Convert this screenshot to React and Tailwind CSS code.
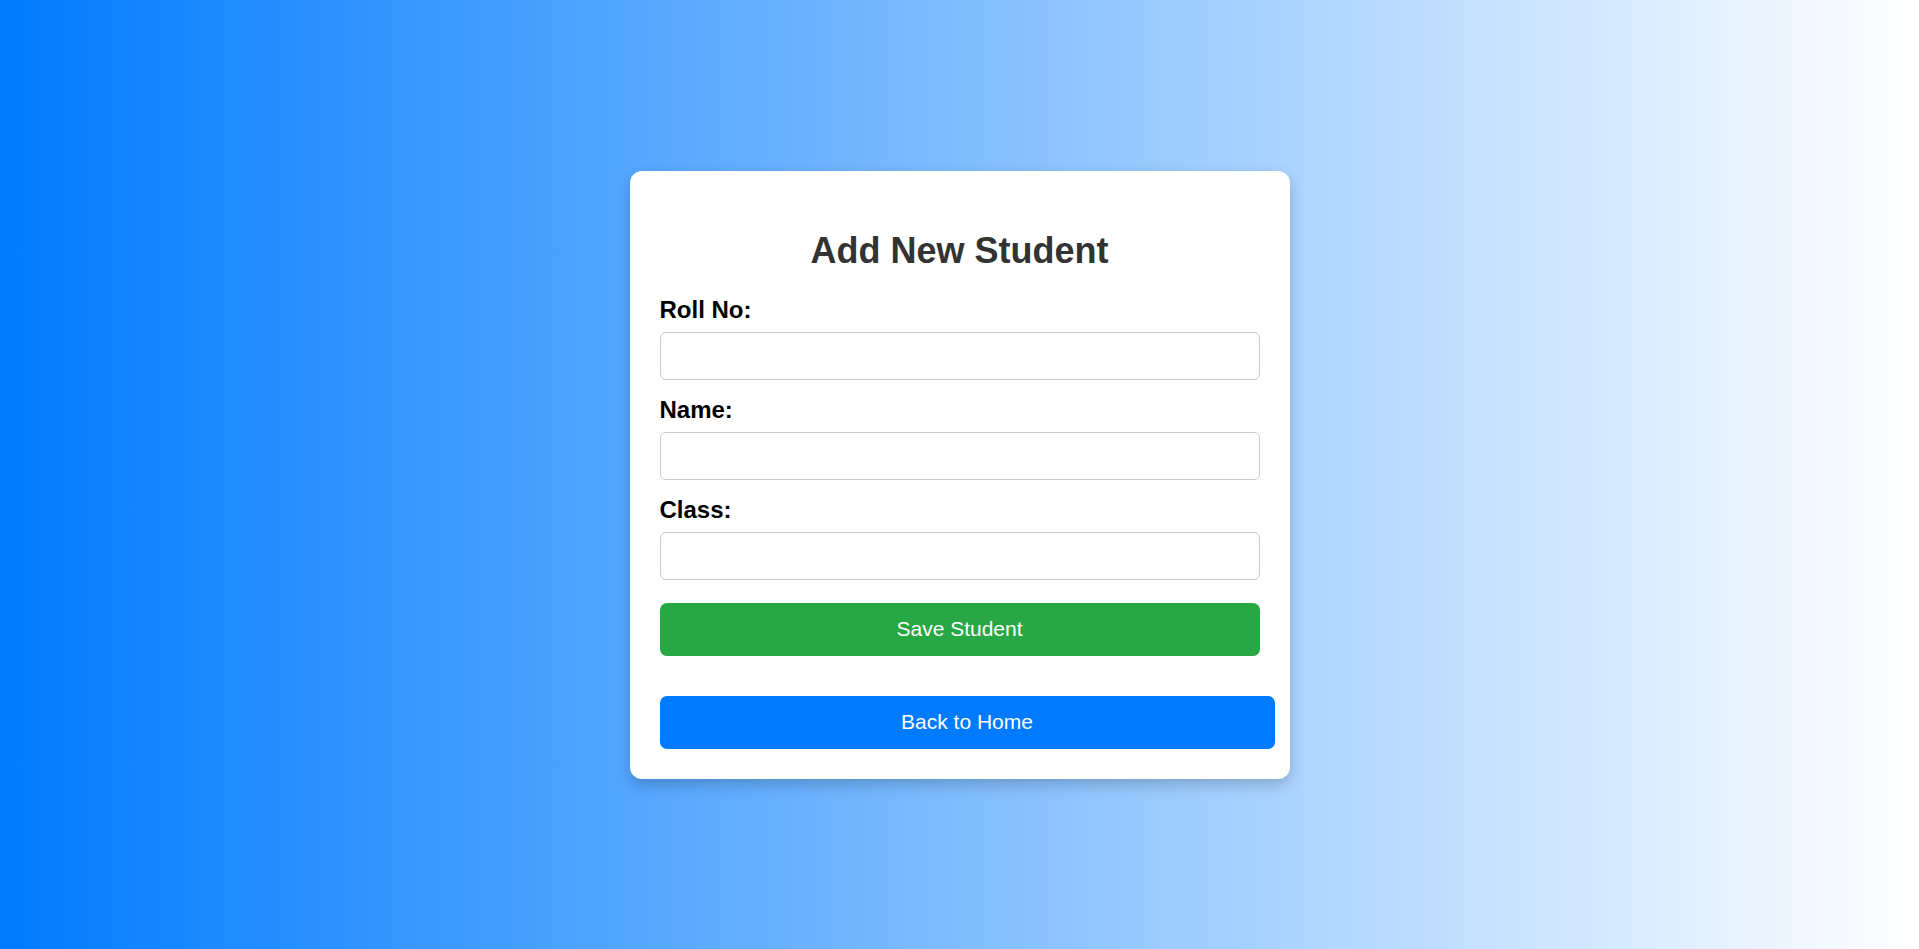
import React from 'react';

const Field = ({ label, last }) => (
    <div>
        <label className="block text-[24px] leading-[28px] font-bold text-black mb-[8px]">{label}</label>
        <input
            type="text"
            className={`block w-full h-[48px] border border-[#cccccc] rounded-[6px] bg-white px-3 text-[21px] outline-none ${last ? 'mb-[23px]' : 'mb-[16px]'}`}
        />
    </div>
);

const App = () => {
    return (
        <div
            className="w-full h-screen flex items-center justify-center bg-[linear-gradient(to_right,#007bff,#ffffff)]"
            style={{ fontFamily: '"Liberation Sans", Arial, sans-serif' }}
        >
            <div className="w-[660px] bg-white rounded-[12px] p-[30px] shadow-[0_6px_15px_rgba(0,0,0,0.2)]">
                <h2 className="text-[36px] leading-[41px] font-bold text-[#333333] text-center mt-[29px] mb-[25px]">
                    Add New Student
                </h2>
                <form onSubmit={(e) => e.preventDefault()}>
                    <Field label="Roll No:" />
                    <Field label="Name:" />
                    <Field label="Class:" last />
                    <button
                        type="submit"
                        className="block w-full h-[53px] rounded-[7px] bg-[#28a745] text-white text-[21px]"
                    >
                        Save Student
                    </button>
                </form>
                <button className="block w-[615px] h-[53px] mt-[40px] rounded-[7px] bg-[#007bff] text-white text-[21px]">
                    Back to Home
                </button>
            </div>
        </div>
    );
};

export default App;
